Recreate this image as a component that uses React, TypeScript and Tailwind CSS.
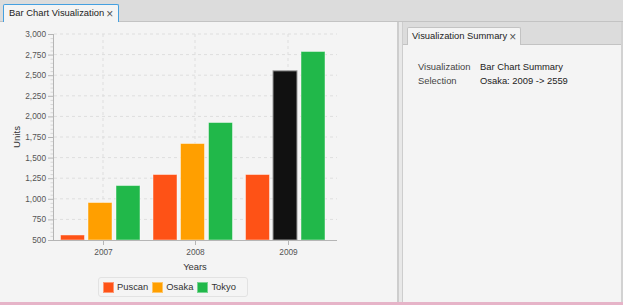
import React from "react";

const Y0 = 240;
const Y1 = 34;
const yOf = (v: number) => Y0 - ((v - 500) * (Y0 - Y1)) / 2500;

const groups = [
  { year: "2007", x: 60, center: 103, values: [567, 961, 1167] },
  { year: "2008", x: 152.5, center: 195, values: [1301, 1677, 1932] },
  { year: "2009", x: 245, center: 288, values: [1301, 2559, 2794] },
];
const colors = ["#fe5216", "#ff9f00", "#21b84a"];
const offsets = [0, 27.5, 55.5];
const majors = [500, 750, 1000, 1250, 1500, 1750, 2000, 2250, 2500, 2750, 3000];

function Chart() {
  const minors: number[] = [];
  for (let v = 500; v < 3000; v += 50) if (v % 250 !== 0) minors.push(v);
  return (
    <svg width={397} height={255} viewBox="0 22 397 255" className="block">
      {majors.slice(1).map((v) => (
        <line key={"h" + v} x1={54} x2={337} y1={yOf(v)} y2={yOf(v)} stroke="#dedede" strokeWidth={1} strokeDasharray="3 3" />
      ))}
      {groups.map((g) => (
        <line key={"v" + g.year} x1={g.center} x2={g.center} y1={Y1} y2={Y0} stroke="#dedede" strokeWidth={1} strokeDasharray="3 3" />
      ))}
      <line x1={53.5} x2={53.5} y1={Y1} y2={Y0} stroke="#b5b5b5" strokeWidth={1} />
      {majors.map((v) => (
        <line key={"mt" + v} x1={48} x2={53} y1={yOf(v) + 0.5} y2={yOf(v) + 0.5} stroke="#b5b5b5" strokeWidth={1} />
      ))}
      {minors.map((v) => (
        <line key={"mn" + v} x1={50.5} x2={53} y1={yOf(v) + 0.5} y2={yOf(v) + 0.5} stroke="#cfcfcf" strokeWidth={0.8} />
      ))}
      {majors.map((v) => (
        <text key={"yl" + v} x={46} y={yOf(v) + 3} textAnchor="end" fontSize={8.3} fill="#555">
          {v.toLocaleString("en-US")}
        </text>
      ))}
      <text x={0} y={0} transform="translate(19.5 137) rotate(-90)" textAnchor="middle" fontSize={9.6} fill="#333">
        Units
      </text>
      {groups.map((g) =>
        g.values.map((v, i) => {
          const black = g.year === "2009" && i === 1;
          const top = yOf(v);
          return (
            <rect
              key={g.year + i}
              x={g.x + offsets[i] + 0.5}
              y={top + 0.5}
              width={24}
              height={Y0 - top - 0.5}
              fill={black ? "#111111" : colors[i]}
              stroke={black ? "#9a9a9a" : "rgba(255,255,255,0.45)"}
              strokeWidth={1}
            />
          );
        })
      )}
      <line x1={53} x2={337} y1={240.5} y2={240.5} stroke="#b5b5b5" strokeWidth={1} />
      {groups.map((g) => (
        <line key={"xt" + g.year} x1={g.center + 0.5} x2={g.center + 0.5} y1={241} y2={245} stroke="#b5b5b5" strokeWidth={1} />
      ))}
      {groups.map((g) => (
        <text key={"xl" + g.year} x={g.center + 0.5} y={255} textAnchor="middle" fontSize={8.3} fill="#555">
          {g.year}
        </text>
      ))}
      <text x={195} y={269.5} textAnchor="middle" fontSize={9.4} fill="#333">
        Years
      </text>
    </svg>
  );
}

function LegendItem({ color, label }: { color: string; label: string }) {
  return (
    <div className="flex items-center gap-[3px]">
      <span className="block w-[11px] h-[11px] border border-white/40" style={{ backgroundColor: color }} />
      <span className="text-[9.4px] text-[#333] leading-none">{label}</span>
    </div>
  );
}

export default function App() {
  return (
    <div className="w-[623px] h-[305px] flex flex-col bg-[#f4f4f4] font-['Liberation_Sans',Arial,sans-serif] overflow-hidden">
      <div className="h-[22px] shrink-0 bg-[#dcdcdc] border-b border-[#c3c3c3] flex items-end pl-[3px] pr-[2px]">
        <div className="h-[18px] mb-[-1px] px-[5px] bg-[#f4f4f4] border border-b-0 border-[#45a0e0] rounded-t-[2px] flex items-center text-[9.4px] text-[#222] whitespace-nowrap">
          Bar Chart Visualization <span className="ml-[2px] text-[12px] leading-none text-[#555]">×</span>
        </div>
      </div>
      <div className="flex-1 flex min-h-0">
        <div className="w-[397px] shrink-0 flex flex-col">
          <Chart />
          <div className="pl-[98px]">
            <div className="w-[150px] h-[20px] border border-[#e2e2e2] rounded-[3px] flex items-center pl-[4px] gap-[4px]">
              <LegendItem color={colors[0]} label="Puscan" />
              <LegendItem color={colors[1]} label="Osaka" />
              <LegendItem color={colors[2]} label="Tokyo" />
            </div>
          </div>
        </div>
        <div className="w-[6px] shrink-0 bg-[#e8e8e8] border-l-2 border-r border-[#cdcdcd]" />
        <div className="flex-1 flex flex-col border-r-2 border-[#d2d2d2]">
          <div className="h-[23px] shrink-0 bg-[#dcdcdc] border-b border-[#c3c3c3] flex items-end pl-[4px]">
            <div className="h-[18px] mb-[-1px] px-[4px] bg-[#f4f4f4] border border-b-0 border-[#c3c3c3] rounded-t-[2px] flex items-center text-[9.4px] text-[#222] whitespace-nowrap">
              Visualization Summary <span className="ml-[2px] text-[12px] leading-none text-[#555]">×</span>
            </div>
          </div>
          <div className="pl-[15px] pt-[17px] grid grid-cols-[62px_auto] gap-y-[4px] text-[9.4px] leading-[10px] text-[#222]">
            <span className="text-[#444]">Visualization</span>
            <span>Bar Chart Summary</span>
            <span className="text-[#444]">Selection</span>
            <span>Osaka: 2009 -&gt; 2559</span>
          </div>
        </div>
      </div>
      <div className="h-[3px] shrink-0 bg-[#e6b4c8]" />
    </div>
  );
}
